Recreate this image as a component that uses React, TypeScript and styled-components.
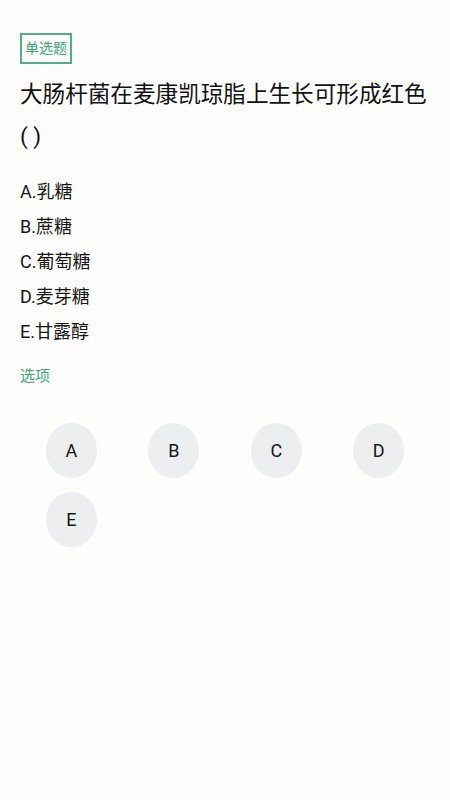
import React from "react";
import styled, { createGlobalStyle } from "styled-components";

const GlobalStyle = createGlobalStyle`
  html, body {
    margin: 0;
    padding: 0;
    background: #fdfdfb;
  }
  body {
    font-family: Roboto, "Noto Sans CJK SC", sans-serif;
    color: #1c1c1c;
  }
`;

type Option = {
  key: string;
  text: string;
};

const options: Option[] = [
  { key: "A", text: "乳糖" },
  { key: "B", text: "蔗糖" },
  { key: "C", text: "葡萄糖" },
  { key: "D", text: "麦芽糖" },
  { key: "E", text: "甘露醇" },
];

const App: React.FC = () => {
  return (
    <Page>
      <GlobalStyle />
      <TypeTag>单选题</TypeTag>
      <Question>大肠杆菌在麦康凯琼脂上生长可形成红色( )</Question>
      <OptionList>
        {options.map(o => (
          <OptionRow key={o.key}>{o.key}.{o.text}</OptionRow>
        ))}
      </OptionList>
      <SectionLabel>选项</SectionLabel>
      <ChoiceGrid>
        {options.map(o => (
          <Cell key={"choice_" + o.key}>
            <Choice>{o.key}</Choice>
          </Cell>
        ))}
      </ChoiceGrid>
    </Page>
  );
};

export default App;

const Page = styled.div`
  min-height: 800px;
  box-sizing: border-box;
  padding: 33px 20px 20px;
  display: flex;
  flex-direction: column;
  align-items: flex-start;
`;

const TypeTag = styled.div`
  border: 2px solid #4cb387;
  color: #38a874;
  font-size: 14px;
  line-height: 21px;
  padding: 3px 3px;
`;

const Question = styled.div`
  margin-top: 10px;
  font-size: 22.6px;
  line-height: 42px;
  color: #111;
  width: 100%;
`;

const OptionList = styled.div`
  margin-top: 16px;
  display: flex;
  flex-direction: column;
`;

const OptionRow = styled.div`
  font-size: 18px;
  line-height: 35px;
  color: #161616;
`;

const SectionLabel = styled.div`
  margin-top: 16px;
  font-size: 15px;
  line-height: 22px;
  color: #38a874;
`;

const ChoiceGrid = styled.div`
  margin-top: 36px;
  width: 100%;
  display: grid;
  grid-template-columns: repeat(4, 1fr);
  row-gap: 14px;
`;

const Cell = styled.div`
  display: flex;
  justify-content: center;
`;

const Choice = styled.div`
  width: 51px;
  height: 55px;
  border-radius: 50%;
  background: #edeef0;
  display: flex;
  align-items: center;
  justify-content: center;
  font-size: 18px;
  color: #161616;
`;
